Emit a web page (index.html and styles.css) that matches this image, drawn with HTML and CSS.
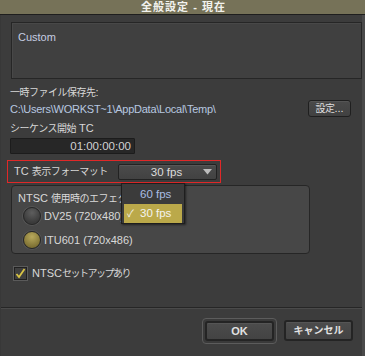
FILE: index.html
```html
<!DOCTYPE html>
<html lang="ja">
<head>
<meta charset="utf-8">
<link rel="stylesheet" href="styles.css">
</head>
<body>
<div class="window">
  <div class="titlebar">全般設定 - 現在</div>
  <div class="body">
    <div class="content">
      <div class="preset">Custom</div>
      <div class="label temp-label"><span class="ja">一時ファイル保存先</span>:</div>
      <div class="path-row">
        <span class="path">C:\Users\WORKST~1\AppData\Local\Temp\</span>
        <button class="btn btn-set"><span class="ja">設定</span>...</button>
      </div>
      <div class="label tc-label"><span class="ja">シーケンス開始</span> TC</div>
      <div class="tc-field">01:00:00:00</div>
      <div class="format-row">
        <span class="format-label">TC <span class="ja">表示フォーマット</span></span>
        <div class="select">
          <span class="select-value">30 fps</span>
          <svg class="select-arrow" width="9" height="6" viewBox="0 0 9 6"><path d="M0 0H9L4.5 5.5Z" fill="#bdbdbd"/></svg>
        </div>
        <div class="menu">
          <div class="menu-item">60 fps</div>
          <div class="menu-item selected"><span class="tick">✓</span>30 fps</div>
        </div>
      </div>
      <div class="group">
        <div class="group-title">NTSC <span class="ja">使用時のエフェクト解像度</span>:</div>
        <div class="radio-row"><span class="radio"></span><span class="radio-text">DV25 (720x480)</span></div>
        <div class="radio-row"><span class="radio on"></span><span class="radio-text">ITU601 (720x486)</span></div>
      </div>
      <div class="check-row">
        <span class="checkbox"><svg width="11" height="11" viewBox="0 0 11 11"><path d="M1.5 6 L4 9 L9.5 1" fill="none" stroke="#d8c444" stroke-width="1.8"/></svg></span>
        <span class="check-text">NTSC<span class="ja tight">セットアップあり</span></span>
      </div>
    </div>
    <div class="footer">
      <div class="btn-ring"><button class="btn btn-main">OK</button></div>
      <button class="btn btn-main btn-cancel"><span class="ja">キャンセル</span></button>
    </div>
  </div>
</div>
</body>
</html>
```
FILE: styles.css
```css
* { box-sizing: border-box; }
html, body { margin: 0; padding: 0; }
body {
  width: 365px;
  height: 356px;
  overflow: hidden;
  background: #3c3c3c;
  font-family: "Liberation Sans", "Noto Sans CJK JP", sans-serif;
  font-size: 11px;
  color: #d6d6d6;
}
.ja {
  font-size: 10px;
  letter-spacing: -0.5px;
}
.ja.tight { letter-spacing: -1.5px; }
.window {
  width: 365px;
  height: 356px;
  display: flex;
  flex-direction: column;
}
.titlebar {
  height: 15px;
  background: #767258;
  border-bottom: 1px solid #1e1e1e;
  color: #f2f2ee;
  font-weight: bold;
  font-size: 11px;
  line-height: 14px;
  text-align: center;
  letter-spacing: 1px;
  padding-left: 2px;
}
.body {
  flex: 1;
  display: flex;
  flex-direction: column;
  border-right: 3px solid #4a4a4a;
  border-left: 1px solid #383838;
}
.content {
  padding-left: 9px;
  display: flex;
  flex-direction: column;
  align-items: flex-start;
}
.preset {
  margin-top: 7px;
  margin-left: 1px;
  width: 351px;
  height: 57px;
  border: 1px solid #262626;
  box-shadow: inset 1px 1px 0 #484848;
  background: #404040;
  color: #c5cde0;
  padding: 7px 0 0 6px;
  font-size: 11px;
  line-height: 14px;
}
.label {
  line-height: 14px;
  color: #d8d8d8;
  white-space: nowrap;
}
.temp-label { margin-top: 6px; }
.path-row {
  width: 341px;
  height: 17px;
  display: flex;
  align-items: center;
  justify-content: space-between;
}
.path {
  color: #b8c8e0;
  letter-spacing: -0.25px;
  line-height: 14px;
}
.btn {
  font-family: "Liberation Sans", "Noto Sans CJK JP", sans-serif;
  background: linear-gradient(#4a4a4a, #414141);
  border: 1px solid #1f1f1f;
  border-radius: 3px;
  color: #dedede;
  padding: 0;
  margin: 0;
  box-shadow: inset 0 1px 0 #555;
}
.btn-set {
  width: 43px;
  height: 17px;
  font-size: 11px;
  line-height: 14px;
  white-space: nowrap;
}
.tc-label { margin-top: 4px; }
.tc-field {
  margin-top: 2px;
  width: 125px;
  height: 16px;
  background: #272727;
  border: 1px solid #1c1c1c;
  border-radius: 1px;
  text-align: right;
  padding-right: 3px;
  line-height: 14px;
  color: #d2d2d2;
  font-size: 11.5px;
}
.format-row {
  position: relative;
  margin-top: 6px;
  margin-left: -3px;
  width: 214px;
  height: 23px;
  border: 1px solid #e02828;
  display: flex;
  align-items: center;
  padding-left: 6px;
  z-index: 2;
}
.format-label {
  width: 104px;
  line-height: 14px;
  white-space: nowrap;
}
.select {
  width: 99px;
  height: 16px;
  border: 1px solid #222;
  border-radius: 2px;
  background: linear-gradient(#4b4b4b, #424242);
  box-shadow: inset 0 1px 0 #575757;
  display: flex;
  align-items: center;
  justify-content: center;
  position: relative;
}
.select-value {
  font-size: 11.5px;
  color: #dcdcdc;
  line-height: 14px;
  margin-right: 2px;
}
.select-arrow {
  position: absolute;
  right: 4px;
  top: 4px;
}
.menu {
  position: absolute;
  left: 113px;
  top: 22px;
  width: 64px;
  height: 41px;
  background: #3b3b3b;
  border: 1px solid #1e1e1e;
  box-shadow: 1px 1px 2px rgba(0,0,0,0.5);
  padding: 1px 2px;
}
.menu-item {
  height: 19px;
  line-height: 19px;
  padding-left: 16px;
  color: #a9bde4;
  font-size: 11.5px;
  position: relative;
}
.menu-item.selected {
  background: #bba94a;
  color: #f4f4f0;
  padding-left: 16px;
}
.tick {
  position: absolute;
  left: 3px;
  top: 0;
  font-size: 10px;
  color: #f4f4f0;
}
.group {
  margin-top: 2px;
  margin-left: 1px;
  width: 299px;
  height: 69px;
  background: #474747;
  border: 1px solid #262626;
  border-radius: 4px;
  padding: 5px 0 0 6px;
}
.group-title {
  line-height: 14px;
  color: #dadada;
  white-space: nowrap;
}
.radio-row {
  display: flex;
  align-items: center;
  margin-top: 0;
  margin-left: 5px;
  height: 20px;
}
.radio-row + .radio-row { margin-top: 4px; }
.radio {
  width: 18px;
  height: 18px;
  border-radius: 50%;
  border: 1px solid #262626;
  background: radial-gradient(circle at 50% 30%, #5e5e5e, #3b3b3b 70%);
  box-shadow: 0 0 0 1px #555;
  margin-right: 3px;
}
.radio.on {
  background: radial-gradient(circle at 50% 30%, #b8a95c, #7d7033 75%);
}
.radio-text {
  line-height: 14px;
  color: #d8d8d8;
}
.check-row {
  margin-top: 12px;
  margin-left: 4px;
  display: flex;
  align-items: center;
}
.checkbox {
  width: 13px;
  height: 13px;
  border: 1px solid #202020;
  background: #3f3f3f;
  box-shadow: 0 0 0 1px #5a5a5a;
  display: flex;
  align-items: flex-start;
  justify-content: center;
  margin-right: 5px;
}
.check-text {
  line-height: 14px;
  color: #d8d8d8;
  white-space: nowrap;
}
.footer {
  margin-top: auto;
  height: 49px;
  border-top: 1px solid #262626;
  box-shadow: inset 0 1px 0 #4a4a4a;
  display: flex;
  align-items: flex-start;
  justify-content: flex-end;
  padding-top: 10px;
  padding-right: 9px;
  gap: 7px;
}
.btn-ring {
  border: 1px solid #5c5c5c;
  border-radius: 4px;
  padding: 2px;
  background: #3a3a3a;
}
.btn-main {
  display: block;
  width: 69px;
  height: 20px;
  font-weight: bold;
  font-size: 11px;
  line-height: 16px;
  color: #e2e2e2;
  border: 2px solid #242424;
  background: linear-gradient(#4c4c4c, #434343);
  white-space: nowrap;
}
.btn-main .ja { font-size: 10px; letter-spacing: 0; }
.btn-cancel { margin-top: 2px; height: 21px; }
```
